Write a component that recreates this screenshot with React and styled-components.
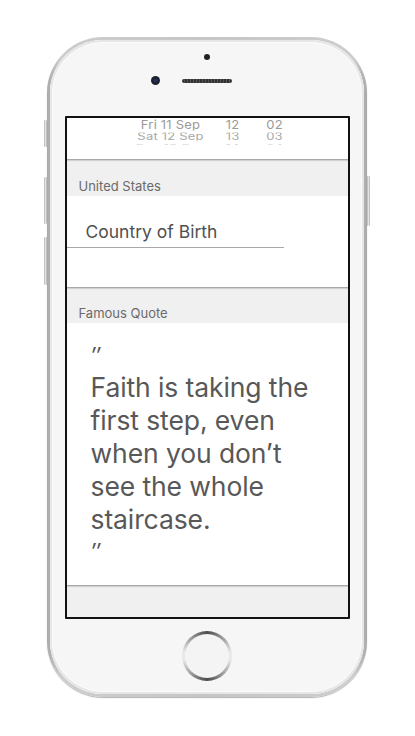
import React from "react";
import styled, { createGlobalStyle } from "styled-components";

const GlobalStyle = createGlobalStyle`
  html, body {
    margin: 0;
    padding: 0;
    background: #ffffff;
  }
  body {
    font-family: Inter, "Liberation Sans", sans-serif;
  }
`;

const Page = styled.div`
  width: 415px;
  height: 736px;
  padding: 37px 0 0 47px;
  box-sizing: border-box;
`;

const Phone = styled.div`
  position: relative;
  width: 320px;
  height: 660px;
  box-sizing: border-box;
  padding: 3px;
  border-radius: 56px;
  background: linear-gradient(90deg, #a9a9a9 0%, #cdcdcd 4%, #c6c6c6 50%, #cdcdcd 96%, #a9a9a9 100%);
  box-shadow: 0 1px 1px rgba(0, 0, 0, 0.3);
`;

const SideButton = styled.div`
  position: absolute;
  top: ${(p) => p.$top}px;
  height: ${(p) => p.$h}px;
  width: 3px;
  ${(p) => (p.$right ? "right: -3px;" : "left: -3px;")}
  background: linear-gradient(90deg, #b0b0b0, #e4e4e4, #b0b0b0);
  border-radius: 1px;
`;

const Face = styled.div`
  height: 100%;
  box-sizing: border-box;
  border-radius: 53px;
  background: #f6f6f6;
  box-shadow: inset 0 0 0 2px #e6e6e6, inset 0 0 0 3px #fbfbfb;
  display: flex;
  flex-direction: column;
  align-items: center;
`;

const TopBar = styled.div`
  height: 76px;
  width: 100%;
  display: flex;
  flex-direction: column;
  align-items: center;
  padding-top: 14px;
  box-sizing: border-box;
`;

const Sensor = styled.div`
  width: 6px;
  height: 6px;
  border-radius: 50%;
  background: #222;
`;

const EarRow = styled.div`
  margin-top: 16px;
  display: flex;
  align-items: center;
`;

const Camera = styled.div`
  width: 9px;
  height: 9px;
  border-radius: 50%;
  background: radial-gradient(circle at 50% 50%, #2b3a66 0, #1a1f33 45%, #222 70%, #555 100%);
  margin-right: 22px;
`;

const Speaker = styled.div`
  width: 50px;
  height: 4px;
  border-radius: 2px;
  background: repeating-linear-gradient(90deg, #333 0 2px, #555 2px 3px);
  margin-right: 31px;
`;

const Screen = styled.div`
  width: 285px;
  height: 503px;
  box-sizing: border-box;
  border: 2px solid #111;
  border-radius: 1px;
  background: #f0f0f0;
  overflow: hidden;
  display: flex;
  flex-direction: column;
`;

const Card = styled.div`
  background: #ffffff;
  height: ${(p) => p.$h}px;
  box-shadow: 0 1px 0 #a9a9a9, 0 2px 1px rgba(0, 0, 0, 0.12);
  position: relative;
  flex-shrink: 0;
`;

const Picker = styled.div`
  height: 27px;
  overflow: hidden;
  padding-left: 64px;
`;

const PickerRow = styled.div`
  display: grid;
  grid-template-columns: 80px 40px 40px;
  column-gap: 2px;
  height: ${(p) => p.$h}px;
  line-height: ${(p) => p.$h}px;
  font-size: ${(p) => p.$size}px;
  color: ${(p) => p.$color};
  transform: scaleY(${(p) => p.$scale});
  transform-origin: center;
  text-align: center;
  letter-spacing: 0.2px;
  overflow: hidden;
`;

const SectionHeader = styled.div`
  height: ${(p) => p.$h}px;
  display: flex;
  align-items: flex-end;
  padding: 0 0 2px 12px;
  box-sizing: border-box;
  font-size: 13px;
  color: #6b6b6b;
  flex-shrink: 0;
`;

const FieldWrap = styled.div`
  padding-top: 25px;
  width: 217px;
`;

const Field = styled.div`
  padding: 0 0 4px 19px;
  font-size: 17.5px;
  color: #505050;
  border-bottom: 1px solid #a8a8a8;
  line-height: 22px;
`;

const Quote = styled.div`
  padding: 12px 16px 0 24px;
  font-size: 26.5px;
  line-height: 33px;
  color: #585858;
  letter-spacing: -0.1px;
`;

const QuoteMark = styled.div`
  font-size: 22px;
  font-style: italic;
  color: #555555;
  height: ${(p) => p.$h}px;
  line-height: ${(p) => p.$lh}px;
`;

const Bottom = styled.div`
  flex: 1;
  width: 100%;
  display: flex;
  align-items: center;
  justify-content: center;
`;

const HomeButton = styled.div`
  width: 50px;
  height: 50px;
  border-radius: 50%;
  background: conic-gradient(#4a4a4a 0deg, #e8e8e8 80deg, #e8e8e8 100deg, #4a4a4a 180deg, #e8e8e8 260deg, #e8e8e8 280deg, #4a4a4a 360deg);
  display: flex;
  align-items: center;
  justify-content: center;
  margin-bottom: 2px;
`;

const HomeInner = styled.div`
  width: 44px;
  height: 44px;
  border-radius: 50%;
  background: #f4f4f4;
`;

const pickerRows = [
  { day: "Fri 11 Sep", h: "12", m: "02", color: "#9a9a9a", scale: 0.95, size: 13, height: 13 },
  { day: "Sat 12 Sep", h: "13", m: "03", color: "#a8a8a8", scale: 0.75, size: 13, height: 11 },
  { day: "Sun 13 Sep", h: "14", m: "04", color: "#c4c4c4", scale: 0.5, size: 13, height: 9 },
];

export default function App() {
  return (
    <Page>
      <GlobalStyle />
      <Phone>
        <SideButton $top={83} $h={27} />
        <SideButton $top={140} $h={47} />
        <SideButton $top={200} $h={48} />
        <SideButton $right $top={139} $h={50} />
        <Face>
          <TopBar>
            <Sensor />
            <EarRow>
              <Camera />
              <Speaker />
            </EarRow>
          </TopBar>
          <Screen>
            <Card $h={41}>
              <Picker>
                {pickerRows.map((r) => (
                  <PickerRow
                    key={r.day}
                    $h={r.height}
                    $size={r.size}
                    $color={r.color}
                    $scale={r.scale}
                  >
                    <span>{r.day}</span>
                    <span>{r.h}</span>
                    <span>{r.m}</span>
                  </PickerRow>
                ))}
              </Picker>
            </Card>
            <SectionHeader $h={37}>United States</SectionHeader>
            <Card $h={91}>
              <FieldWrap>
                <Field>Country of Birth</Field>
              </FieldWrap>
            </Card>
            <SectionHeader $h={36}>Famous Quote</SectionHeader>
            <Card $h={262}>
              <Quote>
                <QuoteMark $h={36} $lh={40}>″</QuoteMark>
                <div>Faith is taking the first step, even when you don’t see the whole staircase.</div>
                <QuoteMark $h={24} $lh={30}>″</QuoteMark>
              </Quote>
            </Card>
          </Screen>
          <Bottom>
            <HomeButton>
              <HomeInner />
            </HomeButton>
          </Bottom>
        </Face>
      </Phone>
    </Page>
  );
}
